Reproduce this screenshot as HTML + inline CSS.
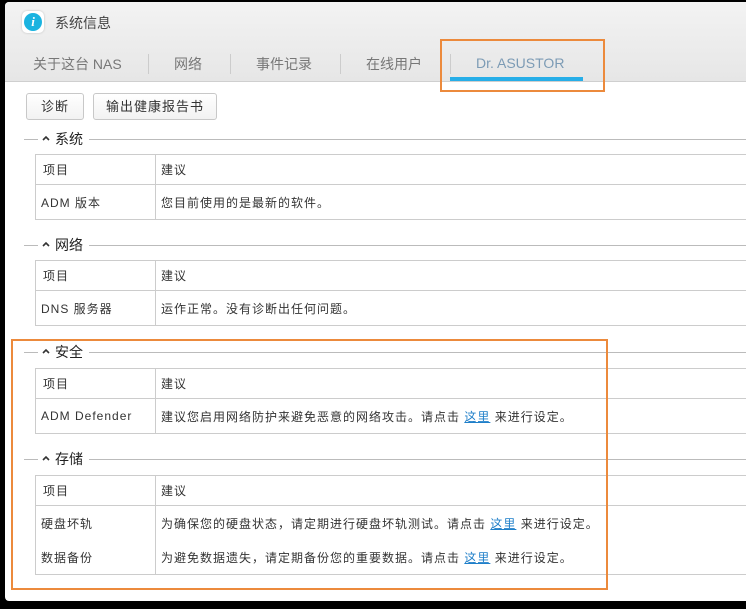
<!DOCTYPE html>
<html><head><meta charset="utf-8"><style>
*{margin:0;padding:0;box-sizing:border-box}
body{width:746px;height:609px;background:#000;position:relative;overflow:hidden;font-family:"Liberation Sans","Noto Sans CJK SC",sans-serif;font-size:12px;color:#333}
.win{position:absolute;left:5px;top:2px;width:741px;height:599px;background:#fff;border-radius:4px 0 0 4px;overflow:hidden}
.hdr{position:absolute;left:0;top:0;width:741px;height:80px;background:linear-gradient(#f3f3f3,#e6e6e6);border-bottom:1px solid #cfcfcf}
.icon{position:absolute;left:17px;top:9px;width:22px;height:22px;border-radius:5px;background:#fff;box-shadow:0 0 2px #bbb}
.icon div{position:absolute;left:2px;top:2px;width:18px;height:18px;border-radius:50%;background:#1ab3e0;color:#fff;font:italic bold 13px "Liberation Serif",serif;text-align:center;line-height:18px}
.title{position:absolute;left:50px;top:11px;font-size:14px;color:#444}
.tab{position:absolute;top:52px;font-size:14px;color:#777}
.sep{position:absolute;top:52px;width:1px;height:20px;background:#ccc}
.ul{position:absolute;left:445px;top:75px;width:133px;height:4px;background:#27aee8}
.ob{position:absolute;border:2px solid #ec8a3c}
.btn{position:absolute;top:91px;height:27px;border:1px solid #c8c8c8;border-radius:3px;background:linear-gradient(#fff,#f2f2f2);font-size:13px;text-align:center;line-height:25px;color:#333;letter-spacing:1px}
.sec{position:absolute;left:19px;width:722px;height:1px;background:#bbb}
.sec span{position:absolute;left:14px;top:-10px;background:#fff;padding:0 6px 0 4px;font-size:14px;color:#222;line-height:20px}
.sec svg{margin-right:5px;vertical-align:middle;position:relative;top:-2px}
table{position:absolute;left:30px;width:720px;border-collapse:collapse;border:1px solid #ccc}
td{border-top:1px solid #ccc;font-size:12px;color:#333;padding:0;vertical-align:middle;letter-spacing:1px}
td.a{width:120px;border-right:1px solid #ccc;padding-left:5px}
td.b{padding-left:5px}
tr.h td{height:30px}
tr.h td.a{padding-left:7px}
a{color:#1f7fc9;text-decoration:underline}
</style></head><body>
<div class="win">
<div class="hdr">
<div class="icon"><div>i</div></div>
<div class="title">系统信息</div>
<div class="tab" style="left:28px">关于这台 NAS</div>
<div class="sep" style="left:143px"></div>
<div class="tab" style="left:169px">网络</div>
<div class="sep" style="left:225px"></div>
<div class="tab" style="left:251px">事件记录</div>
<div class="sep" style="left:335px"></div>
<div class="tab" style="left:361px">在线用户</div>
<div class="sep" style="left:445px"></div>
<div class="tab" style="left:471px;top:53px;color:#7c9bb5">Dr. ASUSTOR</div>
<div class="ul"></div>
</div>
<div class="btn" style="left:21px;width:58px">诊断</div>
<div class="btn" style="left:88px;width:124px">输出健康报告书</div>

<div class="sec" style="top:137px"><span><svg width="8" height="6"><path d="M1 5L4 2L7 5" stroke="#333" stroke-width="1.6" fill="none"/></svg>系统</span></div>
<table style="top:152px"><tr class="h"><td class="a">项目</td><td class="b">建议</td></tr>
<tr style="height:35px"><td class="a">ADM 版本</td><td class="b">您目前使用的是最新的软件。</td></tr></table>

<div class="sec" style="top:243px"><span><svg width="8" height="6"><path d="M1 5L4 2L7 5" stroke="#333" stroke-width="1.6" fill="none"/></svg>网络</span></div>
<table style="top:258px"><tr class="h"><td class="a">项目</td><td class="b">建议</td></tr>
<tr style="height:35px"><td class="a">DNS 服务器</td><td class="b">运作正常。没有诊断出任何问题。</td></tr></table>

<div class="sec" style="top:350px"><span><svg width="8" height="6"><path d="M1 5L4 2L7 5" stroke="#333" stroke-width="1.6" fill="none"/></svg>安全</span></div>
<table style="top:366px"><tr class="h"><td class="a">项目</td><td class="b">建议</td></tr>
<tr style="height:35px"><td class="a">ADM Defender</td><td class="b">建议您启用网络防护来避免恶意的网络攻击。请点击 <a>这里</a> 来进行设定。</td></tr></table>

<div class="sec" style="top:457px"><span><svg width="8" height="6"><path d="M1 5L4 2L7 5" stroke="#333" stroke-width="1.6" fill="none"/></svg>存储</span></div>
<table style="top:473px"><tr class="h"><td class="a">项目</td><td class="b">建议</td></tr>
<tr style="height:35px"><td class="a">硬盘坏轨</td><td class="b">为确保您的硬盘状态，请定期进行硬盘坏轨测试。请点击 <a>这里</a> 来进行设定。</td></tr>
<tr style="height:34px"><td class="a" style="border-top:none">数据备份</td><td class="b" style="border-top:none">为避免数据遗失，请定期备份您的重要数据。请点击 <a>这里</a> 来进行设定。</td></tr></table>
</div>
<div class="ob" style="left:440px;top:39px;width:165px;height:53px"></div>
<div class="ob" style="left:11px;top:339px;width:597px;height:251px"></div>
</body></html>
